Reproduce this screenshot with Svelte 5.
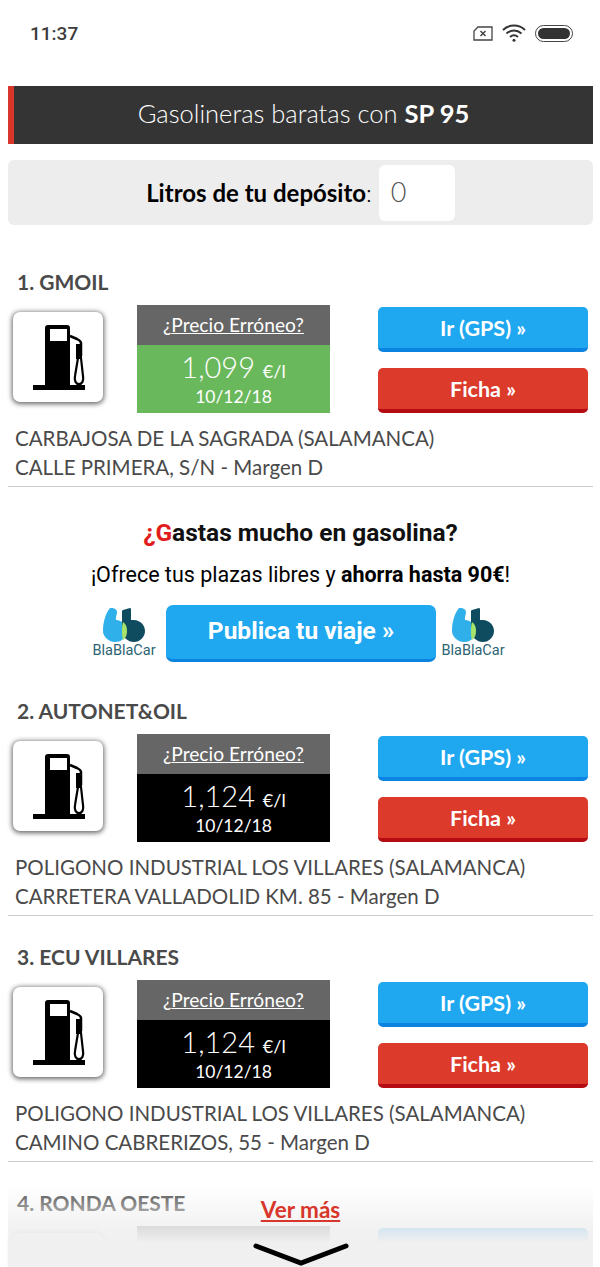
<script>
    let stations = [
        { name: '1. GMOIL', price: '1,099', cheap: true, town: 'CARBAJOSA DE LA SAGRADA (SALAMANCA)', street: 'CALLE PRIMERA, S/N - Margen D' },
        { name: '2. AUTONET&OIL', price: '1,124', town: 'POLIGONO INDUSTRIAL LOS VILLARES (SALAMANCA)', street: 'CARRETERA VALLADOLID KM. 85 - Margen D' },
        { name: '3. ECU VILLARES', price: '1,124', town: 'POLIGONO INDUSTRIAL LOS VILLARES (SALAMANCA)', street: 'CAMINO CABRERIZOS, 55 - Margen D' },
        // only the top of this one shows, under the "Ver más" fade
        { name: '4. RONDA OESTE', faded: true }
    ]
</script>

{#snippet logo()}
    <div class="logo">
        <svg width="42" height="34" viewBox="0 0 42 34">
            <path d="M7 0c3-.5 7 1 7 4 0 3-1.500 5-1 8 6 0 11 5 11 11s-5 11-12 11C6 34 0 29 0 23 0 13 3 5 7 0z" fill="#2fb0ea"/>
            <path d="M20 2l7-2c1 0 1 1 1 2v10h3c6 0 11 5 11 11s-5 11-11 11-12-5-12-11V4c0-1 0-2 1-2z" fill="#0f4c5f"/>
            <path d="M20 14c3 2 4 5 4 9s-1 7-4 9c-1-3-1-6-1-9s0-6 1-9z" fill="#a5e36a"/>
        </svg>
        <span>BlaBlaCar</span>
    </div>
{/snippet}

<div class="page">
    <div class="status">
        <span class="time">11:37</span>
        <div class="status-icons">
            <svg width="20" height="15" viewBox="0 0 20 15" fill="none" stroke="#444" stroke-width="1.3">
                <path d="M5 1h14v13H1V5z"/>
                <path d="M7.500 5l5 5M12.500 5l-5 5" stroke-width="1.500"/>
            </svg>
            <svg width="24" height="18" viewBox="0 0 24 18" fill="none" stroke="#333" stroke-width="2">
                <path d="M1 6c6-6 16-6 22 0M4.500 9.500c4.500-4 10.500-4 15 0M8 13c2.400-2 5.600-2 8 0"/>
                <circle cx="12" cy="16.300" r="1.500" fill="#333" stroke="none"/>
            </svg>
            <div class="battery"><div></div></div>
        </div>
    </div>

    <div class="title-bar">Gasolineras baratas con <b>SP 95</b></div>

    <div class="litros">
        <span><b>Litros de tu depósito</b>:</span>
        <div class="litros-input">0</div>
    </div>

    {#each stations as s, i}
        <div class="station">
            <div class="name">{s.name}</div>
            <div class="row">
                <div class="pump">
                    {#if !s.faded}
                        <svg width="90" height="90" viewBox="0 0 90 90">
                            <path fill-rule="evenodd" d="M35 13h19c2 0 3 1 3 3v57h15v5H20v-5h12V16c0-2 1-3 3-3zM37 17v12h17V17z" fill="#000"/>
                            <path d="M57 24l7 3c2 1 4 2 4 4v13" fill="none" stroke="#000" stroke-width="2.500"/>
                            <path d="M63 32h6v15h-6z" fill="#000"/>
                            <path d="M65 46l-3 18c-1 5 1 8 4 8s5-3 4-8l-2-18" fill="none" stroke="#000" stroke-width="2.200"/>
                        </svg>
                    {/if}
                </div>
                <div class="price">
                    <div class="wrong">
                        {#if !s.faded}¿<u>Precio Erróneo?</u>{/if}
                    </div>
                    <div class="amount" class:cheap={s.cheap}>
                        {#if !s.faded}
                            <div class="value">{s.price} <small>€/l</small></div>
                            <div class="date">10/12/18</div>
                        {/if}
                    </div>
                </div>
                <div class="actions">
                    <div class="btn blue">{s.faded ? '' : 'Ir (GPS) »'}</div>
                    <div class="btn red">{s.faded ? '' : 'Ficha »'}</div>
                </div>
            </div>
            {#if !s.faded}
                <div class="address">{s.town}<br />{s.street}</div>
            {/if}
        </div>

        {#if i === 0}
            <div class="ad">
                <div class="ad-title"><span>¿G</span>astas mucho en gasolina?</div>
                <div class="ad-text">¡Ofrece tus plazas libres y <b>ahorra hasta 90€</b>!</div>
                <div class="ad-row">
                    {@render logo()}
                    <div class="publish">Publica tu viaje »</div>
                    {@render logo()}
                </div>
            </div>
        {/if}
    {/each}

    <div class="more">
        <u>Ver más</u>
        <svg width="96" height="26" viewBox="0 0 96 26" fill="none" stroke="#000" stroke-width="5" stroke-linecap="round">
            <path d="M3 3l45 17 45-17"/>
        </svg>
    </div>
</div>

<style>
    :global(body) {
        margin: 0;
        background: #fff;
    }
    b {
        font-weight: 700;
    }
    .page {
        position: relative;
        height: 1267px;
        overflow: hidden;
        padding: 0 7px 0 8px;
        box-sizing: border-box;
        font-family: Lato, "Open Sans", sans-serif;
        color: #4a4a4a;
    }
    .status {
        display: flex;
        justify-content: space-between;
        align-items: center;
        height: 66px;
        margin-bottom: 20px;
        padding: 0 20px 0 22px;
    }
    .time {
        font: 500 19px Roboto, sans-serif;
        color: #3c3c3c;
    }
    .status-icons {
        display: flex;
        align-items: center;
        gap: 9px;
    }
    .battery {
        width: 38px;
        height: 17px;
        border: 1.500px solid #444;
        border-radius: 9px;
        padding: 2px;
        box-sizing: border-box;
    }
    .battery div {
        height: 100%;
        background: #333;
        border-radius: 6px;
    }
    .title-bar {
        height: 58px;
        line-height: 54px;
        background: #343434;
        border-left: 6px solid #d8362a;
        color: #fff;
        font-size: 25.500px;
        font-weight: 300;
        text-align: center;
    }
    .litros {
        display: flex;
        justify-content: center;
        align-items: center;
        gap: 7px;
        height: 65px;
        margin: 16px 0 45px;
        background: #ededed;
        border-radius: 6px;
        font-size: 24px;
        font-weight: 300;
        color: #000;
    }
    .litros-input {
        width: 76px;
        height: 56px;
        line-height: 54px;
        background: #fff;
        border-radius: 6px;
        padding-left: 12px;
        box-sizing: border-box;
        font-size: 27px;
        font-weight: 300;
        color: #555;
    }
    .station {
        border-bottom: 1px solid #ccc;
        padding-bottom: 4px;
        margin-bottom: 29px;
    }
    .name {
        height: 26px;
        line-height: 24px;
        margin-left: 9px;
        margin-bottom: 9px;
        font-size: 21px;
        font-weight: 700;
    }
    .row {
        display: flex;
        align-items: flex-start;
        height: 108px;
    }
    .pump {
        width: 90px;
        height: 90px;
        margin: 7px 34px 0 5px;
        background: #fff;
        border-radius: 7px;
        box-shadow: 0 1px 5px 1px #666;
    }
    .price {
        width: 193px;
        text-align: center;
    }
    .wrong {
        height: 40px;
        line-height: 40px;
        background: #666;
        color: #fff;
        font-size: 19.200px;
    }
    .amount {
        height: 68px;
        background: #000;
        color: #fff;
        padding-top: 5px;
        box-sizing: border-box;
    }
    .amount.cheap {
        background: #6ab85c;
    }
    .value {
        font-size: 29px;
        font-weight: 300;
        line-height: 34px;
    }
    .value small {
        font-size: 18px;
        font-weight: 400;
    }
    .date {
        font-size: 17.500px;
        line-height: 18px;
    }
    .actions {
        width: 210px;
        margin-left: 48px;
        padding-top: 2px;
    }
    .btn {
        height: 45px;
        line-height: 43px;
        border-radius: 5px;
        box-sizing: border-box;
        color: #fff;
        font-size: 21.500px;
        font-weight: 700;
        text-align: center;
    }
    .btn.blue {
        background: #1fa8f0;
        border-bottom: 4px solid #0a84e0;
        margin-bottom: 16px;
    }
    .btn.red {
        background: #dc3a2a;
        border-bottom: 4px solid #b50c14;
    }
    .address {
        margin: 11px 0 0 7px;
        height: 58px;
        font-size: 20.500px;
        line-height: 29px;
        white-space: nowrap;
    }
    .ad {
        margin-top: -29px;
        height: 212px;
        padding-top: 31px;
        box-sizing: border-box;
        font-family: Roboto, sans-serif;
        color: #000;
        text-align: center;
    }
    .ad-title {
        font-size: 24.500px;
        font-weight: 700;
        line-height: 30px;
        color: #111;
    }
    .ad-title span {
        color: #e21c1c;
    }
    .ad-text {
        font-size: 21.500px;
        line-height: 26px;
        margin-top: 14px;
    }
    .ad-row {
        display: flex;
        align-items: center;
        gap: 11px;
        margin-top: 17px;
        padding-left: 85px;
    }
    .publish {
        width: 270px;
        height: 57px;
        line-height: 52px;
        background: #1fa8f0;
        border-bottom: 3px solid #0a84e0;
        border-radius: 7px;
        box-sizing: border-box;
        color: #fff;
        font-size: 24.500px;
        font-weight: 700;
    }
    .logo {
        width: 62px;
        display: flex;
        flex-direction: column;
        align-items: center;
    }
    .logo:last-child {
        margin-left: -5px;
    }
    .logo span {
        font: 14.500px/18px Roboto, sans-serif;
        color: #2c6474;
    }
    .more {
        position: absolute;
        left: 8px;
        right: 7px;
        top: 1186px;
        height: 81px;
        overflow: hidden;
        background: linear-gradient(rgba(240,240,240,0), rgba(240,240,240,0.85) 50%, #f0f0f0 70%);
        text-align: center;
        color: #d8362a;
        font-size: 22.500px;
        font-weight: 700;
    }
    .more u {
        display: block;
        margin-top: 12px;
        line-height: 24px;
    }
    .more svg {
        display: block;
        margin: 21px auto 0;
    }
</style>
